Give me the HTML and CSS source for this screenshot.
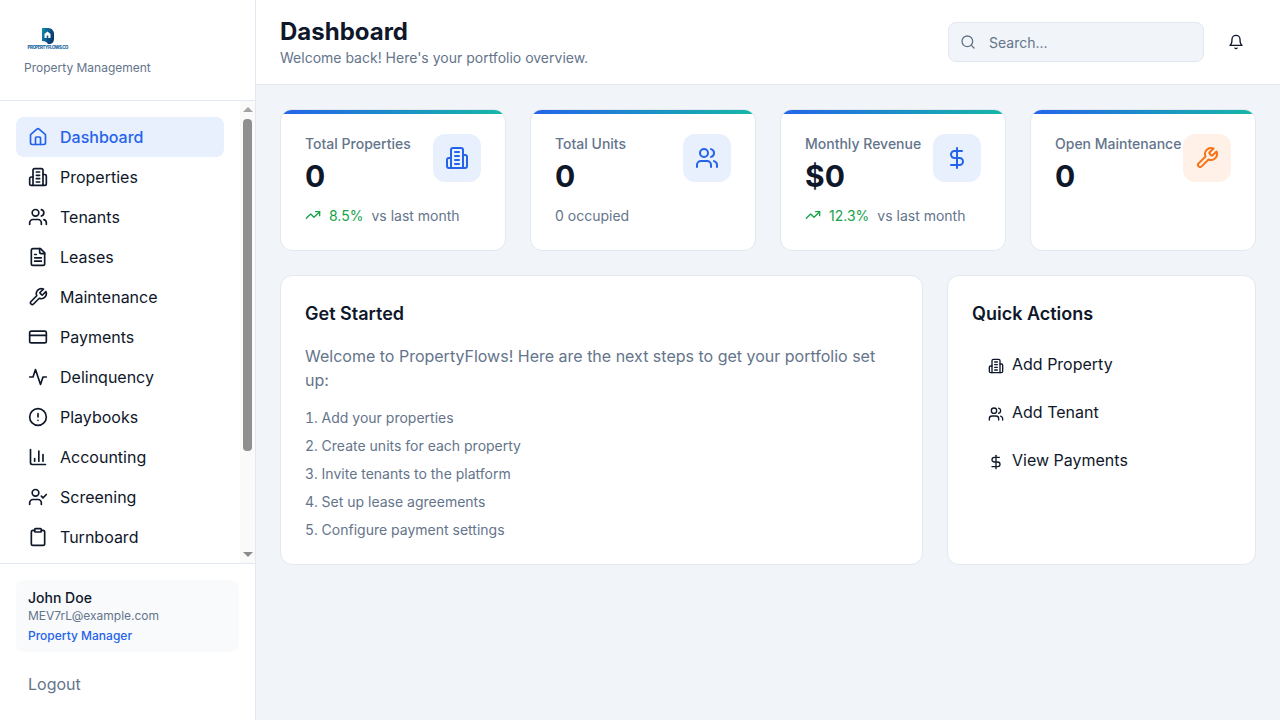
FILE: index.html
```html
<!DOCTYPE html>
<html lang="en">
  <head>
    <meta charset="UTF-8" />
    <meta name="viewport" content="width=device-width, initial-scale=1.0" />
    <title>PropertyFlows - Dashboard</title>
    <link rel="stylesheet" href="styles.css">
  </head>
  <body>
    <!-- icon sprite -->
    <svg class="sprite" xmlns="http://www.w3.org/2000/svg">
      <symbol id="i-home" viewBox="0 0 24 24"><path d="M15 21v-8a1 1 0 0 0-1-1h-4a1 1 0 0 0-1 1v8"/><path d="M3 10a2 2 0 0 1 .709-1.528l7-5.999a2 2 0 0 1 2.582 0l7 5.999A2 2 0 0 1 21 10v9a2 2 0 0 1-2 2H5a2 2 0 0 1-2-2z"/></symbol>
      <symbol id="i-building" viewBox="0 0 24 24"><path d="M6 22V4a2 2 0 0 1 2-2h8a2 2 0 0 1 2 2v18Z"/><path d="M6 12H4a2 2 0 0 0-2 2v6a2 2 0 0 0 2 2h2"/><path d="M18 9h2a2 2 0 0 1 2 2v9a2 2 0 0 1-2 2h-2"/><path d="M10 6h4"/><path d="M10 10h4"/><path d="M10 14h4"/><path d="M10 18h4"/></symbol>
      <symbol id="i-users" viewBox="0 0 24 24"><path d="M16 21v-2a4 4 0 0 0-4-4H6a4 4 0 0 0-4 4v2"/><circle cx="9" cy="7" r="4"/><path d="M22 21v-2a4 4 0 0 0-3-3.87"/><path d="M16 3.13a4 4 0 0 1 0 7.75"/></symbol>
      <symbol id="i-file" viewBox="0 0 24 24"><path d="M15 2H6a2 2 0 0 0-2 2v16a2 2 0 0 0 2 2h12a2 2 0 0 0 2-2V7Z"/><path d="M14 2v4a2 2 0 0 0 2 2h4"/><path d="M10 9H8"/><path d="M16 13H8"/><path d="M16 17H8"/></symbol>
      <symbol id="i-wrench" viewBox="0 0 24 24"><path d="M14.7 6.3a1 1 0 0 0 0 1.4l1.6 1.6a1 1 0 0 0 1.4 0l3.77-3.77a6 6 0 0 1-7.94 7.94l-6.91 6.91a2.12 2.12 0 0 1-3-3l6.91-6.91a6 6 0 0 1 7.94-7.94l-3.76 3.76z"/></symbol>
      <symbol id="i-card" viewBox="0 0 24 24"><rect width="20" height="14" x="2" y="5" rx="2"/><path d="M2 10h20"/></symbol>
      <symbol id="i-activity" viewBox="0 0 24 24"><path d="M22 12h-4l-3 9L9 3l-3 9H2"/></symbol>
      <symbol id="i-alert" viewBox="0 0 24 24"><circle cx="12" cy="12" r="10"/><path d="M12 8v4"/><path d="M12 16h.01"/></symbol>
      <symbol id="i-chart" viewBox="0 0 24 24"><path d="M3 3v16a2 2 0 0 0 2 2h16"/><path d="M18 17V9"/><path d="M13 17V5"/><path d="M8 17v-3"/></symbol>
      <symbol id="i-usercheck" viewBox="0 0 24 24"><path d="M16 21v-2a4 4 0 0 0-4-4H6a4 4 0 0 0-4 4v2"/><circle cx="9" cy="7" r="4"/><path d="m16 11 2 2 4-4"/></symbol>
      <symbol id="i-clipboard" viewBox="0 0 24 24"><rect width="8" height="4" x="8" y="2" rx="1"/><path d="M16 4h2a2 2 0 0 1 2 2v14a2 2 0 0 1-2 2H6a2 2 0 0 1-2-2V6a2 2 0 0 1 2-2h2"/></symbol>
      <symbol id="i-trend" viewBox="0 0 24 24"><path d="m22 7-8.5 8.5-5-5L2 17"/><path d="M16 7h6v6"/></symbol>
      <symbol id="i-dollar" viewBox="0 0 24 24"><path d="M12 2v20"/><path d="M17 5H9.5a3.5 3.5 0 0 0 0 7h5a3.5 3.5 0 0 1 0 7H6"/></symbol>
      <symbol id="i-search" viewBox="0 0 24 24"><circle cx="11" cy="11" r="8"/><path d="m21 21-4.3-4.3"/></symbol>
      <symbol id="i-bell" viewBox="0 0 24 24"><path d="M6 8a6 6 0 0 1 12 0c0 7 3 9 3 9H3s3-2 3-9"/><path d="M10.3 21a1.94 1.94 0 0 0 3.4 0"/></symbol>
      <linearGradient id="logo-fill" x1="0" y1="0" x2="1" y2="0.4"><stop offset="0" stop-color="#0e93ad"/><stop offset="0.55" stop-color="#0b5a8e"/><stop offset="1" stop-color="#0a3a6b"/></linearGradient>
    </svg>

    <div class="app">
      <aside class="sidebar">
        <div class="brand">
          <svg class="logo" viewBox="0 0 42 22" xmlns="http://www.w3.org/2000/svg">
            <path d="M15 0h6c4 0 6 3 6 6v5c0 3-2 5-5 5h-1c-1-2-3-3-6-3z" fill="url(#logo-fill)"/>
            <path d="M20.5 3.5l3 2.6V10h-6V6.100z" fill="#fff"/>
            <path d="M19.700 7.500h1.600V10h-1.600z" fill="#0b5a8e"/>
            <text class="logo-text" x="0.5" y="20.500" textLength="41">PROPERTYFLOWS.CO</text>
          </svg>
          <p class="brand-sub">Property Management</p>
        </div>

        <div class="nav-wrap">
          <nav class="nav">
            <a class="nav-item active"><svg class="icon"><use href="#i-home"/></svg>Dashboard</a>
            <a class="nav-item"><svg class="icon"><use href="#i-building"/></svg>Properties</a>
            <a class="nav-item"><svg class="icon"><use href="#i-users"/></svg>Tenants</a>
            <a class="nav-item"><svg class="icon"><use href="#i-file"/></svg>Leases</a>
            <a class="nav-item"><svg class="icon"><use href="#i-wrench"/></svg>Maintenance</a>
            <a class="nav-item"><svg class="icon"><use href="#i-card"/></svg>Payments</a>
            <a class="nav-item"><svg class="icon"><use href="#i-activity"/></svg>Delinquency</a>
            <a class="nav-item"><svg class="icon"><use href="#i-alert"/></svg>Playbooks</a>
            <a class="nav-item"><svg class="icon"><use href="#i-chart"/></svg>Accounting</a>
            <a class="nav-item"><svg class="icon"><use href="#i-usercheck"/></svg>Screening</a>
            <a class="nav-item"><svg class="icon"><use href="#i-clipboard"/></svg>Turnboard</a>
          </nav>
          <div class="scrollbar">
            <span class="arrow-up"></span>
            <span class="thumb"></span>
            <span class="arrow-down"></span>
          </div>
        </div>

        <div class="sidebar-footer">
          <div class="user-box">
            <div class="user-name">John Doe</div>
            <div class="user-email">MEV7rL@example.com</div>
            <div class="user-role">Property Manager</div>
          </div>
          <button class="logout" type="button">Logout</button>
        </div>
      </aside>

      <div class="content">
        <header class="topbar">
          <div>
            <h1>Dashboard</h1>
            <p class="subtitle">Welcome back! Here's your portfolio overview.</p>
          </div>
          <div class="topbar-right">
            <label class="search">
              <svg class="icon-sm search-icon"><use href="#i-search"/></svg>
              <input type="text" placeholder="Search..." />
            </label>
            <button class="bell" type="button"><svg class="icon-sm"><use href="#i-bell"/></svg></button>
          </div>
        </header>

        <main class="main">
          <section class="stats">
            <div class="stat-card">
              <div class="stat-top">
                <div>
                  <div class="stat-label">Total Properties</div>
                  <div class="stat-value">0</div>
                </div>
                <div class="stat-icon"><svg class="icon-lg"><use href="#i-building"/></svg></div>
              </div>
              <div class="stat-foot">
                <svg class="icon-sm trend-icon"><use href="#i-trend"/></svg>
                <span class="trend">8.5%</span>
                <span>vs last month</span>
              </div>
            </div>

            <div class="stat-card">
              <div class="stat-top">
                <div>
                  <div class="stat-label">Total Units</div>
                  <div class="stat-value">0</div>
                </div>
                <div class="stat-icon"><svg class="icon-lg"><use href="#i-users"/></svg></div>
              </div>
              <div class="stat-foot"><span>0 occupied</span></div>
            </div>

            <div class="stat-card">
              <div class="stat-top">
                <div>
                  <div class="stat-label">Monthly Revenue</div>
                  <div class="stat-value">$0</div>
                </div>
                <div class="stat-icon"><svg class="icon-lg"><use href="#i-dollar"/></svg></div>
              </div>
              <div class="stat-foot">
                <svg class="icon-sm trend-icon"><use href="#i-trend"/></svg>
                <span class="trend">12.3%</span>
                <span>vs last month</span>
              </div>
            </div>

            <div class="stat-card">
              <div class="stat-top">
                <div>
                  <div class="stat-label">Open Maintenance</div>
                  <div class="stat-value">0</div>
                </div>
                <div class="stat-icon warn"><svg class="icon-lg"><use href="#i-wrench"/></svg></div>
              </div>
            </div>
          </section>

          <section class="panels">
            <div class="panel">
              <h2>Get Started</h2>
              <p class="intro">Welcome to PropertyFlows! Here are the next steps to get your portfolio set up:</p>
              <ol class="steps">
                <li>Add your properties</li>
                <li>Create units for each property</li>
                <li>Invite tenants to the platform</li>
                <li>Set up lease agreements</li>
                <li>Configure payment settings</li>
              </ol>
            </div>

            <div class="panel">
              <h2>Quick Actions</h2>
              <div class="actions">
                <button class="action" type="button"><svg class="icon-sm"><use href="#i-building"/></svg>Add Property</button>
                <button class="action" type="button"><svg class="icon-sm"><use href="#i-users"/></svg>Add Tenant</button>
                <button class="action" type="button"><svg class="icon-sm"><use href="#i-dollar"/></svg>View Payments</button>
              </div>
            </div>
          </section>
        </main>
      </div>
    </div>
  </body>
</html>
```

FILE: styles.css
```css
* {
  box-sizing: border-box;
}

body {
  font-family: Inter, "Liberation Sans", sans-serif;
  background-color: #f1f5f9;
  color: #0f172a;
  margin: 0;
  height: 720px;
  overflow: hidden;
}

h1, h2, p, ol {
  margin: 0;
  padding: 0;
}

button {
  font-family: inherit;
  background: none;
  border: none;
  cursor: pointer;
}

.sprite {
  position: absolute;
  width: 0;
  height: 0;
}

.icon, .icon-sm, .icon-lg {
  fill: none;
  stroke: currentColor;
  stroke-width: 2;
  stroke-linecap: round;
  stroke-linejoin: round;
  flex-shrink: 0;
}

.icon { width: 20px; height: 20px; }
.icon-sm { width: 16px; height: 16px; }
.icon-lg { width: 24px; height: 24px; }

.app {
  display: flex;
  height: 720px;
}

/* sidebar */
.sidebar {
  width: 256px;
  flex-shrink: 0;
  display: flex;
  flex-direction: column;
  background-color: #fff;
  border-right: 1px solid #e2e8f0;
}

.brand {
  height: 101px;
  padding: 28px 24px 0;
  border-bottom: 1px solid #e2e8f0;
  flex-shrink: 0;
}

.logo {
  display: block;
  width: 42px;
  height: 22px;
  margin-left: 3px;
}

.logo-text {
  font-size: 4.4px;
  font-weight: 800;
  fill: #17689f;
}

.brand-sub {
  font-size: 12px;
  line-height: 16px;
  color: #64748b;
  margin-top: 10px;
}

.nav-wrap {
  flex: 1;
  min-height: 0;
  display: flex;
}

.nav {
  flex: 1;
  min-width: 0;
  padding: 16px;
}

.nav-item {
  display: flex;
  align-items: center;
  gap: 12px;
  height: 40px;
  padding: 0 12px;
  border-radius: 8px;
  font-size: 16px;
  color: #0f172a;
}

.nav-item.active {
  background-color: #e8effd;
  color: #2563eb;
  font-weight: 500;
}

/* same look as the browser's scrollbar in the sidebar */
.scrollbar {
  width: 15px;
  flex-shrink: 0;
  display: flex;
  flex-direction: column;
  align-items: center;
  padding: 6px 0;
  background-color: #fafafa;
}

.arrow-up, .arrow-down {
  width: 0;
  height: 0;
  border-left: 5px solid transparent;
  border-right: 5px solid transparent;
}

.arrow-up {
  border-bottom: 5px solid #a3a3a3;
}

.arrow-down {
  border-top: 5px solid #8c8c8c;
  margin-top: auto;
}

.thumb {
  width: 9px;
  height: 332px;
  margin-top: 7px;
  border-radius: 4px;
  background-color: #8f8f8f;
}

.sidebar-footer {
  flex-shrink: 0;
  padding: 16px;
  border-top: 1px solid #e2e8f0;
}

.user-box {
  padding: 8px 12px;
  border-radius: 8px;
  background-color: #f8fafc;
}

.user-name {
  font-size: 14px;
  line-height: 20px;
  font-weight: 500;
}

.user-email {
  font-size: 12px;
  line-height: 16px;
  color: #64748b;
}

.user-role {
  font-size: 12px;
  line-height: 16px;
  font-weight: 500;
  color: #2563eb;
  margin-top: 4px;
}

.logout {
  display: block;
  width: 100%;
  height: 40px;
  margin-top: 12px;
  padding: 0 12px;
  text-align: left;
  font-size: 16px;
  color: #64748b;
}

/* top bar */
.content {
  flex: 1;
  min-width: 0;
  display: flex;
  flex-direction: column;
}

.topbar {
  height: 85px;
  flex-shrink: 0;
  display: flex;
  align-items: center;
  justify-content: space-between;
  padding: 0 24px;
  background-color: #fff;
  border-bottom: 1px solid #e2e8f0;
}

h1 {
  font-size: 24px;
  line-height: 32px;
  font-weight: 700;
}

.subtitle {
  font-size: 14px;
  line-height: 20px;
  color: #64748b;
}

.topbar-right {
  display: flex;
  align-items: center;
  gap: 12px;
}

.search {
  position: relative;
  display: block;
  width: 256px;
}

.search-icon {
  position: absolute;
  left: 12px;
  top: 12px;
  color: #64748b;
}

.search input {
  display: block;
  width: 100%;
  height: 40px;
  padding: 0 12px 0 40px;
  font-family: inherit;
  font-size: 14px;
  color: #0f172a;
  background-color: #f1f5f9;
  border: 1px solid #e2e8f0;
  border-radius: 8px;
  outline: none;
}

.search input::placeholder {
  color: #64748b;
}

.bell {
  display: flex;
  align-items: center;
  justify-content: center;
  width: 40px;
  height: 40px;
  padding: 0;
  color: #0f172a;
}

/* dashboard */
.main {
  padding: 24px;
}

.stats {
  display: grid;
  grid-template-columns: repeat(4, 1fr);
  gap: 24px;
}

.stat-card {
  position: relative;
  padding: 24px;
  background-color: #fff;
  border: 1px solid #e2e8f0;
  border-radius: 12px;
  overflow: hidden;
}

.stat-card::before {
  content: "";
  position: absolute;
  top: 0;
  left: 0;
  right: 0;
  height: 4px;
  background: linear-gradient(90deg, #2563eb, #14b8a6);
}

.stat-top {
  display: flex;
  justify-content: space-between;
  align-items: flex-start;
}

.stat-label {
  font-size: 14px;
  line-height: 20px;
  font-weight: 500;
  color: #64748b;
}

.stat-value {
  font-size: 30px;
  line-height: 36px;
  font-weight: 700;
  margin-top: 4px;
}

.stat-icon {
  display: flex;
  align-items: center;
  justify-content: center;
  width: 48px;
  height: 48px;
  flex-shrink: 0;
  border-radius: 12px;
  background-color: #e8effd;
  color: #2563eb;
}

.stat-icon.warn {
  background-color: #fff1e8;
  color: #f97316;
}

.stat-foot {
  display: flex;
  align-items: center;
  height: 20px;
  margin-top: 11px;
  margin-bottom: 1px;
  font-size: 14px;
  color: #64748b;
}

.trend-icon {
  color: #16a34a;
  margin-right: 8px;
}

.trend {
  color: #16a34a;
  margin-right: 8px;
}

.panels {
  display: grid;
  grid-template-columns: 1fr 309px;
  gap: 24px;
  margin-top: 24px;
}

.panel {
  padding: 24px;
  background-color: #fff;
  border: 1px solid #e2e8f0;
  border-radius: 12px;
}

h2 {
  font-size: 18px;
  line-height: 28px;
  font-weight: 600;
}

.intro {
  margin-top: 16px;
  font-size: 16px;
  line-height: 24px;
  color: #64748b;
}

.steps {
  list-style: decimal inside;
  margin-top: 16px;
  font-size: 14px;
  line-height: 20px;
  color: #64748b;
}

.steps li + li {
  margin-top: 8px;
}

.actions {
  display: flex;
  flex-direction: column;
  gap: 8px;
  margin-top: 16px;
}

.action {
  display: flex;
  align-items: center;
  gap: 8px;
  height: 40px;
  padding: 0 16px;
  font-size: 16px;
  color: #0f172a;
}

.action svg {
  margin-top: 4px;
}
```
